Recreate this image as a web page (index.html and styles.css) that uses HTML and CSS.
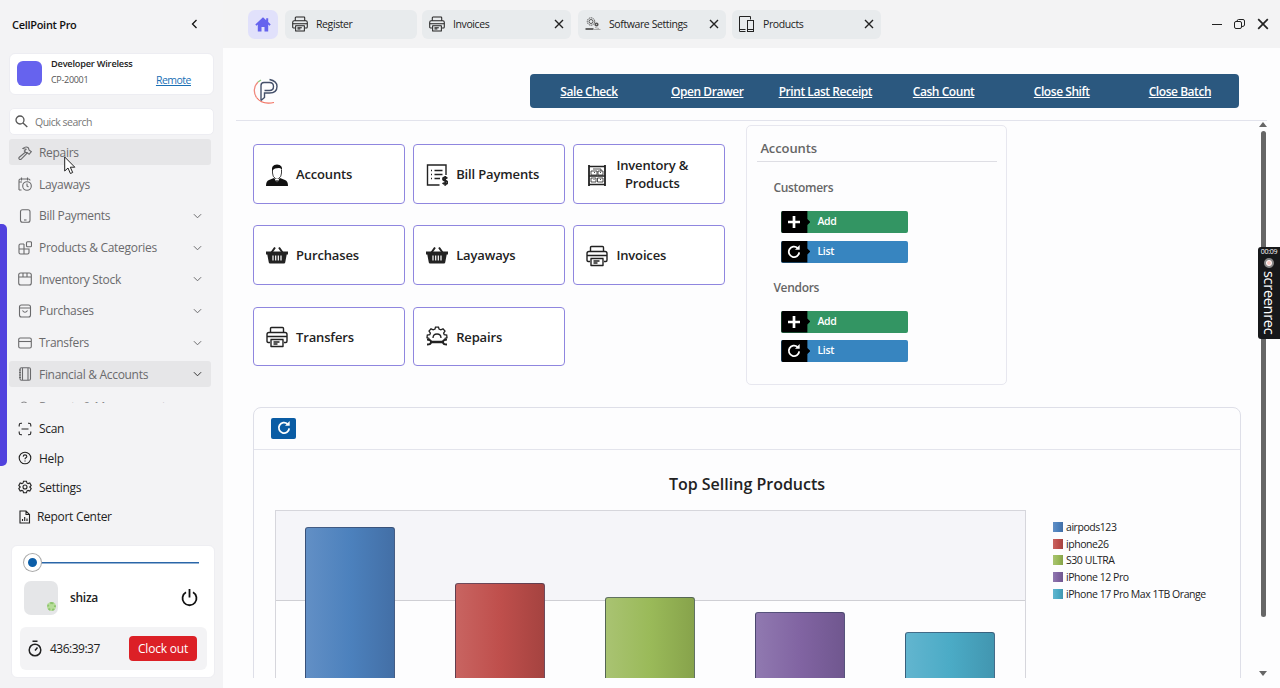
FILE: index.html
```html
<!DOCTYPE html>
<html lang="en">
<head>
  <meta charset="UTF-8">
  <meta name="viewport" content="width=device-width, initial-scale=1.0">
  <title>CellPoint Pro</title>
  <link rel="stylesheet" href="styles.css">
</head>
<body>

  <!-- shared icons -->
  <svg class="sprite">
    <symbol id="i-printer" viewBox="0 0 22 22"><g fill="none" stroke="currentColor" stroke-width="1.4" stroke-linejoin="round"><path d="M4.500 6.500V2.500q0-1 1-1h11q1 0 1 1v4"/><path d="M4 16.500H2.200Q1 16.500 1 15V8.500q0-2 2-2h16q2 0 2 2V15q0 1.500-1.200 1.500H18"/><path d="M1 10.500h20M4.500 13.500h13M5 13.500v7h12v-7M7.500 16h6M7.500 18h4"/></g></symbol>
    <symbol id="i-chev" viewBox="0 0 10 6"><path d="M1 1l4 4 4-4" fill="none" stroke="currentColor"/></symbol>
    <symbol id="i-x" viewBox="0 0 10 10"><path d="M1 1l8 8M9 1L1 9" fill="none" stroke="currentColor" stroke-width="1.400"/></symbol>
    <symbol id="i-basket" viewBox="0 0 22 18"><path d="M0 5.500h22v3h-1.300L19.200 16.500q-.2 1-1.200 1H4q-1 0-1.200-1L1.300 8.500H0z" fill="currentColor"/><path d="M5.500 6.500l3.500-5M16.500 6.500l-3.500-5" stroke="currentColor" stroke-width="2" fill="none"/><path d="M7 9.500v5M9.700 9.500v5M12.300 9.500v5M15 9.500v5" stroke="#fff" stroke-width="1.200"/></symbol>
    <symbol id="i-reload" viewBox="0 0 14 14"><path d="M10.500 3A5.200 5.200 0 1 0 12.200 7.300" fill="none" stroke="currentColor" stroke-width="1.800"/><path d="M8 4.700h4.700V0z" fill="currentColor"/></symbol>
    <symbol id="i-plus" viewBox="0 0 14 14"><path d="M7 1v12M1 7h12" stroke="currentColor" stroke-width="2.700"/></symbol>
  </svg>

  <aside class="sidebar">
    <div class="brand">
      <span>CellPoint Pro</span>
      <svg width="7" height="10" viewBox="0 0 7 10"><path d="M5.500 1l-4 4 4 4" fill="none" stroke="#111" stroke-width="1.300"/></svg>
    </div>

    <div class="store">
      <div class="store-logo"></div>
      <div class="store-info">
        <b>Developer Wireless</b>
        <div class="store-row"><span>CP-20001</span><a href="#">Remote</a></div>
      </div>
    </div>

    <div class="search">
      <svg width="13" height="13" viewBox="0 0 13 13" fill="none" stroke="#555" stroke-width="1.300"><circle cx="5" cy="5" r="4"/><path d="M8 8l4.300 4"/></svg>
      <span>Quick search</span>
    </div>

    <nav class="nav">
      <div class="nav-item active">
        <svg viewBox="0 0 14 14"><path d="M1 11.500L7.500 6l1.300 1.400L3 13.300q-1 .6-1.700-.1T1 11.500zM5 2.500Q8-.3 10.500 2l.5 2 2.300 1.700-2.200 2.600-1.900-1.800H7.600L6.300 5 8 3.300z"/></svg>
        <span>Repairs</span>
      </div>
      <div class="nav-item">
        <svg viewBox="0 0 14 14"><path d="M3.500.5v3M9.500.5v3M1 13V3.500Q1 2 2.500 2h8Q12 2 12 3.500M1 5h3M1 13h2.500"/><circle cx="9" cy="9" r="4.300"/><path d="M9 6.500V9l1.500 1"/></svg>
        <span>Layaways</span>
      </div>
      <div class="nav-item">
        <svg viewBox="0 0 14 14"><rect x="2.500" y=".7" width="9.500" height="12.600" rx="2"/><path d="M6 11h2.500"/></svg>
        <span>Bill Payments</span>
        <svg class="chev"><use href="#i-chev"/></svg>
      </div>
      <div class="nav-item">
        <svg viewBox="0 0 14 14"><path d="M6 3H2.500Q1 3 1 4.500v7Q1 13 2.500 13h7q1.500 0 1.500-1.500V8H1M6 3v10"/><rect x="8.500" y=".7" width="5" height="5" rx="1"/></svg>
        <span>Products &amp; Categories</span>
        <svg class="chev"><use href="#i-chev"/></svg>
      </div>
      <div class="nav-item">
        <svg viewBox="0 0 14 14"><rect x=".7" y="1" width="12.600" height="12" rx="2"/><path d="M1 5h12M5 1v4M9 1v4"/></svg>
        <span>Inventory Stock</span>
        <svg class="chev"><use href="#i-chev"/></svg>
      </div>
      <div class="nav-item">
        <svg viewBox="0 0 14 14"><rect x="1.500" y="1" width="11" height="12" rx="2"/><path d="M1.500 4h11M4.500 6.500q2.500 3.500 5 0"/></svg>
        <span>Purchases</span>
        <svg class="chev"><use href="#i-chev"/></svg>
      </div>
      <div class="nav-item">
        <svg viewBox="0 0 14 14"><rect x=".7" y="2" width="12.600" height="10" rx="1.500"/><path d="M1 5.500h12"/></svg>
        <span>Transfers</span>
        <svg class="chev"><use href="#i-chev"/></svg>
      </div>
      <div class="nav-item active dark">
        <svg viewBox="0 0 14 14"><rect x="2" y=".7" width="10.500" height="12.600" rx="1.500"/><path d="M4.500 1v12M10 1v12"/><path d="M1 3h2M1 5.500h2M1 8h2M1 10.500h2"/></svg>
        <span>Financial &amp; Accounts</span>
        <svg class="chev"><use href="#i-chev"/></svg>
      </div>
      <div class="nav-item last">
        <svg viewBox="0 0 14 14"><circle cx="6" cy="5" r="3"/></svg>
        <span>Reports &amp; Management</span>
      </div>
    </nav>

    <div class="links">
      <div class="link">
        <svg viewBox="0 0 14 14"><path d="M1.200 4.500V3q0-1.800 1.800-1.800h1M10 1.200h1q1.800 0 1.800 1.800v1.500M12.800 9.500V11q0 1.800-1.800 1.800h-1M4 12.800H3q-1.800 0-1.800-1.800V9.500M3.500 7h7"/></svg>
        <span>Scan</span>
      </div>
      <div class="link">
        <svg viewBox="0 0 14 14"><circle cx="7" cy="7" r="5.800"/><path d="M5.200 5.600q.1-1.700 1.800-1.700t1.800 1.500q0 .9-.9 1.400T7 8.200M7 9.500v1"/></svg>
        <span>Help</span>
      </div>
      <div class="link">
        <svg viewBox="0 0 14 14"><path d="M5.500 1.200h3l.4 1.800 1.200.6 1.700-.6 1.400 2.500L11.800 7l1.400 1.500-1.400 2.500-1.700-.6-1.200.6-.4 1.800h-3L5.100 11l-1.200-.6-1.700.6L.8 8.500 2.200 7 .8 5.500 2.200 3l1.700.6L5.100 3z"/><circle cx="7" cy="7" r="2"/></svg>
        <span>Settings</span>
      </div>
      <div class="link report">
        <svg viewBox="0 0 14 14"><path d="M2 1h6l3.500 3.500V13H2zM8 1v3.500h3.500M4.500 11V9M6.700 11V7M9 11V8.500"/></svg>
        <span>Report Center</span>
      </div>
    </div>

    <div class="user-card">
      <div class="slider"><i></i></div>
      <div class="user">
        <div class="avatar"><i></i></div>
        <b>shiza</b>
        <svg width="17" height="18" viewBox="0 0 17 18" fill="none" stroke="#111" stroke-width="1.800"><path d="M5 3.200a7 7 0 1 0 7 0M8.500 0v8.500"/></svg>
      </div>
      <div class="clock">
        <svg width="14" height="17" viewBox="0 0 14 17" fill="none" stroke="#222" stroke-width="1.500"><circle cx="7" cy="10" r="5.800"/><path d="M4.500 1.200h5M7 10.500l2.500-3"/></svg>
        <span>436:39:37</span>
        <button>Clock out</button>
      </div>
    </div>
  </aside>
  <div class="accent"></div>

  <main class="main">
    <header class="tabs">
      <div class="home">
        <svg width="16" height="15" viewBox="0 0 16 15"><path d="M8 .3L.3 7.500l1.200 1.200L2.800 7.600v7h3.700V10h3v4.600h3.700v-7l1.300 1.100 1.200-1.200-2.500-2.400V1.300h-2v2z" fill="#6563ee"/></svg>
      </div>
      <div class="tab register"><svg><use href="#i-printer"/></svg><span>Register</span></div>
      <div class="tab invoices"><svg><use href="#i-printer"/></svg><span>Invoices</span><svg class="x"><use href="#i-x"/></svg></div>
      <div class="tab software">
        <svg viewBox="0 0 16 16" fill="none" stroke="#555"><circle cx="6" cy="5.500" r="3.700" stroke-dasharray="1.500 .6"/><circle cx="6" cy="5.500" r="2"/><circle cx="11.500" cy="8.500" r="1.300" stroke-width="1.600"/><path d="M.5 13h8" stroke-width="1.800"/><path d="M9 13.500h6.500M10 11.500l4 1" stroke="#aaa"/></svg>
        <span>Software Settings</span><svg class="x"><use href="#i-x"/></svg>
      </div>
      <div class="tab products">
        <svg viewBox="0 0 16 16" fill="none" stroke="#222"><path d="M11.500 3.500V.500H.5v15H6.500M.5 13.500h6"/><rect x="8.500" y="4.500" width="6" height="11"/><path d="M8.500 13.500h6"/></svg>
        <span>Products</span><svg class="x"><use href="#i-x"/></svg>
      </div>
      <div class="window-buttons">
        <svg width="10" height="10" viewBox="0 0 10 10"><path d="M0 5.500h10" stroke="#222"/></svg>
        <svg width="11" height="10" viewBox="0 0 11 10" fill="none" stroke="#222"><rect x=".5" y="2.500" width="7" height="7" rx="1.500"/><path d="M3 2.500Q3 .5 4.500 .5H9q1.500 0 1.500 1.500v4Q10.500 7.500 8 7.500"/></svg>
        <svg width="12" height="12"><use href="#i-x"/></svg>
      </div>
    </header>

    <div class="toolbar">
      <svg class="logo" width="27" height="28" viewBox="0 0 27 28" fill="none">
        <path d="M5 5A12 12 0 0 0 3.500 20.500" stroke="#f08a7e" stroke-width="1.300"/>
        <path d="M5 5l3-2" stroke="#8cc87c" stroke-width="1.300"/>
        <path d="M3.500 20.500Q9 28 21 25.500" stroke="#f2705f" stroke-width="1.200"/>
        <path d="M8 23.500V8.500Q8 5.500 11 5.500h5.500q4 0 4 4t-4 4h-5M8 23.500l3.500-3V16h5q7.500 0 7.500-6.500 0-5.500-7.500-7" stroke="#44506a" stroke-width="1.400"/>
      </svg>
      <div class="actions">
        <a href="#">Sale Check</a>
        <a href="#">Open Drawer</a>
        <a href="#">Print Last Receipt</a>
        <a href="#">Cash Count</a>
        <a href="#">Close Shift</a>
        <a href="#">Close Batch</a>
      </div>
    </div>

    <div class="content">
      <div class="top">
        <div class="tiles">
          <div class="tile">
            <svg viewBox="0 0 22 22"><path d="M0 22q0-5 3-6l5-2 3 3 3-3 5 2q3 1 3 6z" fill="#111"/><path d="M6.500 6v3q0 4 3 5.500l1.500 1 1.500-1q3-1.500 3-5.500V6" fill="#fff" stroke="#111" stroke-width=".8"/><path d="M6 7Q5 .5 11 .5T16 7q-.5-3-3-3T9 4.500 6 7z" fill="#111"/><path d="M9 15l2 5 2-5" fill="#fff"/><path d="M10.500 16h1l.7 4-1.200 2-1.200-2z" fill="#111"/></svg>
            <span>Accounts</span>
          </div>
          <div class="tile">
            <svg viewBox="0 0 22 22"><g fill="none" stroke="#222" stroke-width="1.400"><path d="M13.500 21H1.500V1h18.500v10M5 6.500h1M8.500 6.500h8M5 10.500h1M8.500 10.500h8M5 14.500h1M8.500 14.500h5.500"/><path d="M21.300 14.500q-.8-1-2.300-1-2 0-2 1.500t2.200 1.700q2.200.3 2.200 1.700 0 1.600-2.200 1.600-1.800 0-2.500-1.200M19.200 12v9.800" stroke-width="1.800"/></g></svg>
            <span>Bill Payments</span>
          </div>
          <div class="tile">
            <svg viewBox="0 0 22 22" fill="none" stroke="#222"><path d="M3 1v21M19 1v21" stroke-width="1.800"/><path d="M3 2.500h16M3 12h16M3 20.500h16" stroke-width="1.600"/><path d="M5 7h6v4H5zM12 7h5v4h-5zM5 14h5v4H5zM11.500 14h5.500v4h-5.500zM7 5h8v2M8 8.500h1M14 8.500h1M7.500 15.500h1M14 15.500h1" stroke-width=".8"/></svg>
            <span>Inventory &amp;<br>Products</span>
          </div>
          <div class="tile"><svg class="basket"><use href="#i-basket"/></svg><span>Purchases</span></div>
          <div class="tile"><svg class="basket"><use href="#i-basket"/></svg><span>Layaways</span></div>
          <div class="tile"><svg><use href="#i-printer"/></svg><span>Invoices</span></div>
          <div class="tile"><svg><use href="#i-printer"/></svg><span>Transfers</span></div>
          <div class="tile">
            <svg viewBox="0 0 22 22" fill="none" stroke="#222" stroke-width="1.300"><path d="M3.500 12.500l-2.500-.8.300-2.700 2.500-.3.600-1.600L3 5l2-2.200 2.200 1L9 3l.5-1.900h3L13 3l1.800.8 2.200-1L19 5l-1.400 2.100.6 1.600 2.500.3.300 2.700-2.500.8"/><path d="M7 12q0-4 4-4t4 4"/><path d="M4.500 16h13" stroke-width="2.500"/><path d="M1 13.500q4 0 4 2.500T1 18.500M21 13.500q-4 0-4 2.500t4 2.500" stroke-width="2"/></svg>
            <span>Repairs</span>
          </div>
        </div>

        <section class="accounts">
          <h2>Accounts</h2>
          <h3>Customers</h3>
          <div class="btn add"><i><svg><use href="#i-plus"/></svg></i><span>Add</span></div>
          <div class="btn list"><i><svg><use href="#i-reload"/></svg></i><span>List</span></div>
          <h3>Vendors</h3>
          <div class="btn add"><i><svg><use href="#i-plus"/></svg></i><span>Add</span></div>
          <div class="btn list"><i><svg><use href="#i-reload"/></svg></i><span>List</span></div>
        </section>
      </div>

      <section class="chart">
        <div class="chart-head"><button><svg width="14" height="14"><use href="#i-reload"/></svg></button></div>
        <h1>Top Selling Products</h1>
        <div class="chart-body">
          <div class="plot">
            <div class="bar blue" style="height: 151px"></div>
            <div class="bar red" style="height: 95px"></div>
            <div class="bar green" style="height: 81px"></div>
            <div class="bar purple" style="height: 66px"></div>
            <div class="bar cyan" style="height: 46px"></div>
          </div>
          <ul class="legend">
            <li><i class="blue"></i>airpods123</li>
            <li><i class="red"></i>iphone26</li>
            <li><i class="green"></i>S30 ULTRA</li>
            <li><i class="purple"></i>iPhone 12 Pro</li>
            <li><i class="cyan"></i>iPhone 17 Pro Max 1TB Orange</li>
          </ul>
        </div>
      </section>
    </div>
  </main>

  <div class="scrollbar">
    <svg width="8" height="5" viewBox="0 0 8 5"><path d="M4 0l4 5H0z" fill="#666"/></svg>
    <i></i>
    <svg width="8" height="5" viewBox="0 0 8 5"><path d="M0 0h8L4 5z" fill="#666"/></svg>
  </div>

  <div class="recorder">
    <small>00:09</small>
    <i></i>
    <span>screenrec</span>
  </div>

  <svg class="cursor" width="12" height="19" viewBox="0 0 12 19"><path d="M.7 1v14l3.300-3 2.400 5.500 2.300-1-2.400-5.300h4.500z" fill="#fff" stroke="#222"/></svg>

</body>
</html>
```

FILE: styles.css
```css
* {
  box-sizing: border-box;
}

body {
  margin: 0;
  height: 688px;
  display: flex;
  position: relative;
  overflow: hidden;
  background: #fdfdfe;
  color: #222;
  font-family: "Open Sans", "Noto Sans", sans-serif;
  font-size: 12px;
  letter-spacing: -0.3px;
}

h1, h2, h3, ul {
  margin: 0;
  padding: 0;
}

svg {
  flex: none;
}

.sprite {
  position: absolute;
  width: 0;
  height: 0;
}

/* sidebar */
.sidebar {
  width: 223px;
  height: 688px;
  padding: 0 9px;
  background: #f3f3f5;
  display: flex;
  flex-direction: column;
}

.brand {
  height: 48px;
  margin-bottom: 5px;
  padding: 0 16px 0 3px;
  display: flex;
  align-items: center;
  justify-content: space-between;
  font-size: 11px;
  font-weight: 600;
  color: #111;
}

.store {
  height: 42px;
  padding: 0 10px 1px 7px;
  display: flex;
  align-items: center;
  background: #fff;
  border: 1px solid #ededf2;
  border-radius: 6px;
  font-size: 9px;
}

.store-logo {
  width: 25px;
  height: 25px;
  margin-right: 9px;
  border-radius: 6px;
  background: #6663ee;
}

.store-info {
  flex: 1;
  line-height: 14px;
}

.store-info b {
  display: block;
  margin-top: -3px;
  font-weight: 600;
  font-size: 9.2px;
  letter-spacing: -0.2px;
}

.store-row {
  display: flex;
  align-items: center;
  justify-content: space-between;
  padding-right: 12px;
  margin-top: 2px;
  color: #555;
}

.store-row a {
  color: #1a6fb5;
  font-size: 10.5px;
  letter-spacing: -0.5px;
}

.search {
  height: 27px;
  margin-top: 13px;
  padding-left: 5px;
  display: flex;
  align-items: center;
  gap: 7px;
  background: #fff;
  border: 1px solid #ededf2;
  border-radius: 5px;
  color: #777;
  font-size: 10.5px;
  letter-spacing: -0.5px;
}

.nav {
  height: 264px;
  margin-top: 4px;
  overflow: hidden;
}

.nav-item {
  width: 202px;
  height: 26px;
  margin-bottom: 5.7px;
  padding: 1px 9px 0;
  display: flex;
  align-items: center;
  gap: 7px;
  border-radius: 3px;
  color: #6a6a6c;
}

.nav-item > svg,
.link > svg {
  width: 14px;
  height: 14px;
  fill: none;
  stroke: currentColor;
  stroke-width: 1.1;
}

.nav-item .chev {
  width: 9px;
  height: 6px;
  margin-left: auto;
}

.active {
  background: #e6e6e8;
}

.dark .chev {
  color: #333;
}

.last {
  padding-top: 2px;
  color: #8a8a8c;
}

.links {
  margin-top: 11px;
  padding-left: 9px;
}

.link {
  height: 29.4px;
  display: flex;
  align-items: center;
  gap: 7px;
  color: #222;
}

.report {
  gap: 5px;
}

.user-card {
  width: 204px;
  height: 133px;
  margin: 13px 0 0 2px;
  padding: 9px 8px;
  background: #fff;
  border: 1px solid #eeeef2;
  border-radius: 6px;
}

.slider {
  height: 16px;
  margin: 0 7px 0 11px;
  display: flex;
  align-items: center;
  background: linear-gradient(#2a66a8, #2a66a8) center / 100% 1.5px no-repeat;
}

.slider i {
  width: 17px;
  height: 17px;
  margin-left: -7px;
  border: 4px solid #fff;
  border-radius: 50%;
  background: #0b5ea8;
  box-shadow: 0 0 0 1px #aaa;
}

.user {
  height: 34px;
  margin: 10px 8px 0 4px;
  display: flex;
  align-items: center;
}

.user b {
  margin: 0 auto 0 12px;
  font-weight: 600;
}

.avatar {
  width: 34px;
  height: 34px;
  padding: 21px 0 0 23px;
  border-radius: 7px;
  background: #e5e6e8;
}

.avatar i {
  display: block;
  width: 9px;
  height: 9px;
  border: 2px dotted #8cc46c;
  border-radius: 50%;
  background: #b7dd9a;
}

.clock {
  width: 187px;
  height: 43px;
  margin-top: 12px;
  padding: 0 10px 0 8px;
  display: flex;
  align-items: center;
  gap: 8px;
  background: #f3f3f5;
  border-radius: 6px;
  letter-spacing: -0.5px;
}

.clock button {
  width: 68px;
  height: 25px;
  margin-left: auto;
  padding: 0;
  border: none;
  border-radius: 4px;
  background: #dc2026;
  color: #fff;
  font: 12px "Open Sans", sans-serif;
  letter-spacing: -0.2px;
}

/* purple strip at the window edge */
.accent {
  position: absolute;
  left: 0;
  top: 224px;
  width: 7px;
  height: 242px;
  background: #5142de;
  border-radius: 0 5px 5px 0;
}

/* main area */
.main {
  flex: 1;
  min-width: 0;
}

.tabs {
  height: 48px;
  padding: 0 11px 0 25px;
  display: flex;
  align-items: center;
  background: #f3f3f4;
  font-size: 10.5px;
  letter-spacing: -0.4px;
}

.home {
  width: 30px;
  height: 29px;
  margin-right: 7px;
  display: flex;
  align-items: center;
  justify-content: center;
  background: #e1e1fb;
  border-radius: 7px;
}

.tab {
  height: 29px;
  padding: 0 7px;
  display: flex;
  align-items: center;
  gap: 8px;
  background: #e8ebed;
  border-radius: 6px;
}

.tab svg {
  width: 16px;
  height: 16px;
}

.tab .x {
  width: 10px;
  height: 10px;
  margin-left: auto;
}

.register {
  width: 132px;
  margin-right: 5px;
}

.invoices {
  width: 149px;
  margin-right: 7px;
}

.software {
  width: 148px;
  margin-right: 6px;
}

.products {
  width: 149px;
}

.window-buttons {
  margin-left: auto;
  display: flex;
  align-items: center;
  gap: 12px;
}

.toolbar {
  width: 1031px;
  height: 73px;
  margin-left: 13px;
  padding: 26px 28px 0 17px;
  display: flex;
  justify-content: space-between;
  border-bottom: 1px solid #e2e3ec;
}

.logo {
  margin-top: 3px;
}

.actions {
  width: 709px;
  height: 34px;
  padding-top: 1px;
  display: grid;
  grid-template-columns: repeat(6, 1fr);
  align-items: center;
  text-align: center;
  background: #2b587f;
  border-radius: 4px;
  letter-spacing: -0.45px;
}

.actions a {
  color: #fff;
  font-weight: 600;
}

.content {
  height: 557px;
  padding: 4px 0 0 30px;
  overflow: hidden;
}

.top {
  display: flex;
  gap: 21px;
}

.tiles {
  margin-top: 19px;
  display: grid;
  grid-template-columns: repeat(3, 152px);
  grid-auto-rows: 59.5px;
  gap: 21.8px 8.2px;
  align-content: start;
}

.tile {
  padding: 2px 0 0 12px;
  display: flex;
  align-items: center;
  gap: 8px;
  background: #fff;
  border: 1px solid #8f86df;
  border-radius: 4px;
  font-size: 13px;
  font-weight: 600;
  line-height: 17.5px;
  letter-spacing: -0.15px;
  text-align: center;
}

.tile svg {
  width: 22px;
  height: 22px;
}

.tile .basket {
  height: 18px;
  margin-bottom: 2px;
}

.accounts {
  width: 261px;
  height: 260px;
  padding: 13px 9px 0 10px;
  border: 1px solid #e7e7ef;
  border-radius: 5px;
  color: #666;
}

.accounts h2 {
  height: 23px;
  padding-left: 3px;
  border-bottom: 1px solid #dedee4;
  font-size: 13px;
  font-weight: 600;
  line-height: 19px;
  letter-spacing: -0.1px;
}

.accounts h3 {
  margin: 18px 0 0 16px;
  font-size: 12px;
  font-weight: 600;
  line-height: 16px;
}

.btn {
  width: 127px;
  height: 22px;
  margin: 7.5px 0 0 24px;
  display: flex;
  background: #339563;
  border-radius: 2px;
  overflow: hidden;
  color: #fff;
  font-size: 10.5px;
  font-weight: 600;
  line-height: 21px;
}

.add {
  margin-top: 15px;
}

.list {
  background: #3785c0;
}

.btn i {
  width: 29px;
  padding: 4px 0 0 6px;
  background: #000;
  clip-path: polygon(0 0, 26px 0, 26px 8px, 29px 11px, 26px 14px, 26px 100%, 0 100%);
}

.btn svg {
  display: block;
  width: 14px;
  height: 14px;
}

.btn span {
  margin-left: 7px;
}

.list + h3 {
  margin-top: 17px;
}

/* chart card */
.chart {
  width: 988px;
  height: 300px;
  margin-top: 21.5px;
  border: 1px solid #dedfe8;
  border-radius: 8px;
}

.chart-head {
  height: 42px;
  padding: 10px 0 0 17px;
  border-bottom: 1px solid #e3e4ec;
}

.chart-head button {
  width: 25px;
  height: 21px;
  padding: 0;
  display: flex;
  align-items: center;
  justify-content: center;
  border: none;
  border-radius: 2px;
  background: #0a5ca4;
  color: #fff;
}

.chart h1 {
  height: 60px;
  padding-top: 22px;
  font-size: 16px;
  font-weight: 600;
  line-height: 24px;
  letter-spacing: 0;
  text-align: center;
}

.chart-body {
  display: flex;
}

.plot {
  width: 751px;
  height: 168px;
  margin-left: 21px;
  padding-left: 29px;
  display: flex;
  align-items: flex-end;
  gap: 60px;
  border: 1px solid #d6d6dc;
  border-bottom: none;
  background: linear-gradient(#f5f5f9 89px, #cfcfd4 89px, #cfcfd4 90px, transparent 90px);
}

.bar {
  width: 90px;
  border: 1px solid rgba(50, 60, 90, 0.6);
  border-bottom: none;
  border-radius: 3px 3px 0 0;
}

.blue {
  background: linear-gradient(90deg, #628fc5, #4c81bd 50%, #436fa6);
}

.red {
  background: linear-gradient(90deg, #c86461, #bf4f4c 50%, #a54340);
}

.green {
  background: linear-gradient(90deg, #a9c372, #9aba59 50%, #87a34b);
}

.purple {
  background: linear-gradient(90deg, #9079b0, #8164a2 50%, #70578f);
}

.cyan {
  background: linear-gradient(90deg, #62b5cf, #4babc6 50%, #4296b0);
}

.legend {
  margin: 9px 0 0 27px;
  list-style: none;
  font-size: 10.5px;
  letter-spacing: -0.45px;
}

.legend li {
  height: 16.7px;
  display: flex;
  align-items: center;
  gap: 3px;
}

.legend i {
  width: 10px;
  height: 10px;
}

.scrollbar {
  position: absolute;
  left: 1259px;
  top: 122px;
  height: 554px;
  display: flex;
  flex-direction: column;
  align-items: center;
}

.scrollbar i {
  width: 5px;
  height: 486px;
  margin: 4px 0 auto;
  background: #666;
  border-radius: 3px;
}

.recorder {
  position: absolute;
  left: 1258px;
  top: 247px;
  width: 22px;
  height: 92px;
  display: flex;
  flex-direction: column;
  align-items: center;
  background: #17181a;
  border-radius: 3px 0 0 3px;
  color: #fff;
}

.recorder small {
  font-size: 7px;
  line-height: 10px;
}

.recorder i {
  width: 10px;
  height: 10px;
  margin: 1px 0 3px;
  border: 2px solid #888;
  border-radius: 50%;
  background: #f6c9c2;
  box-shadow: inset 0 0 0 1px #fff;
}

.recorder span {
  writing-mode: vertical-rl;
  font-size: 14.5px;
  line-height: 20px;
}

.cursor {
  position: absolute;
  left: 64px;
  top: 156px;
}
```
